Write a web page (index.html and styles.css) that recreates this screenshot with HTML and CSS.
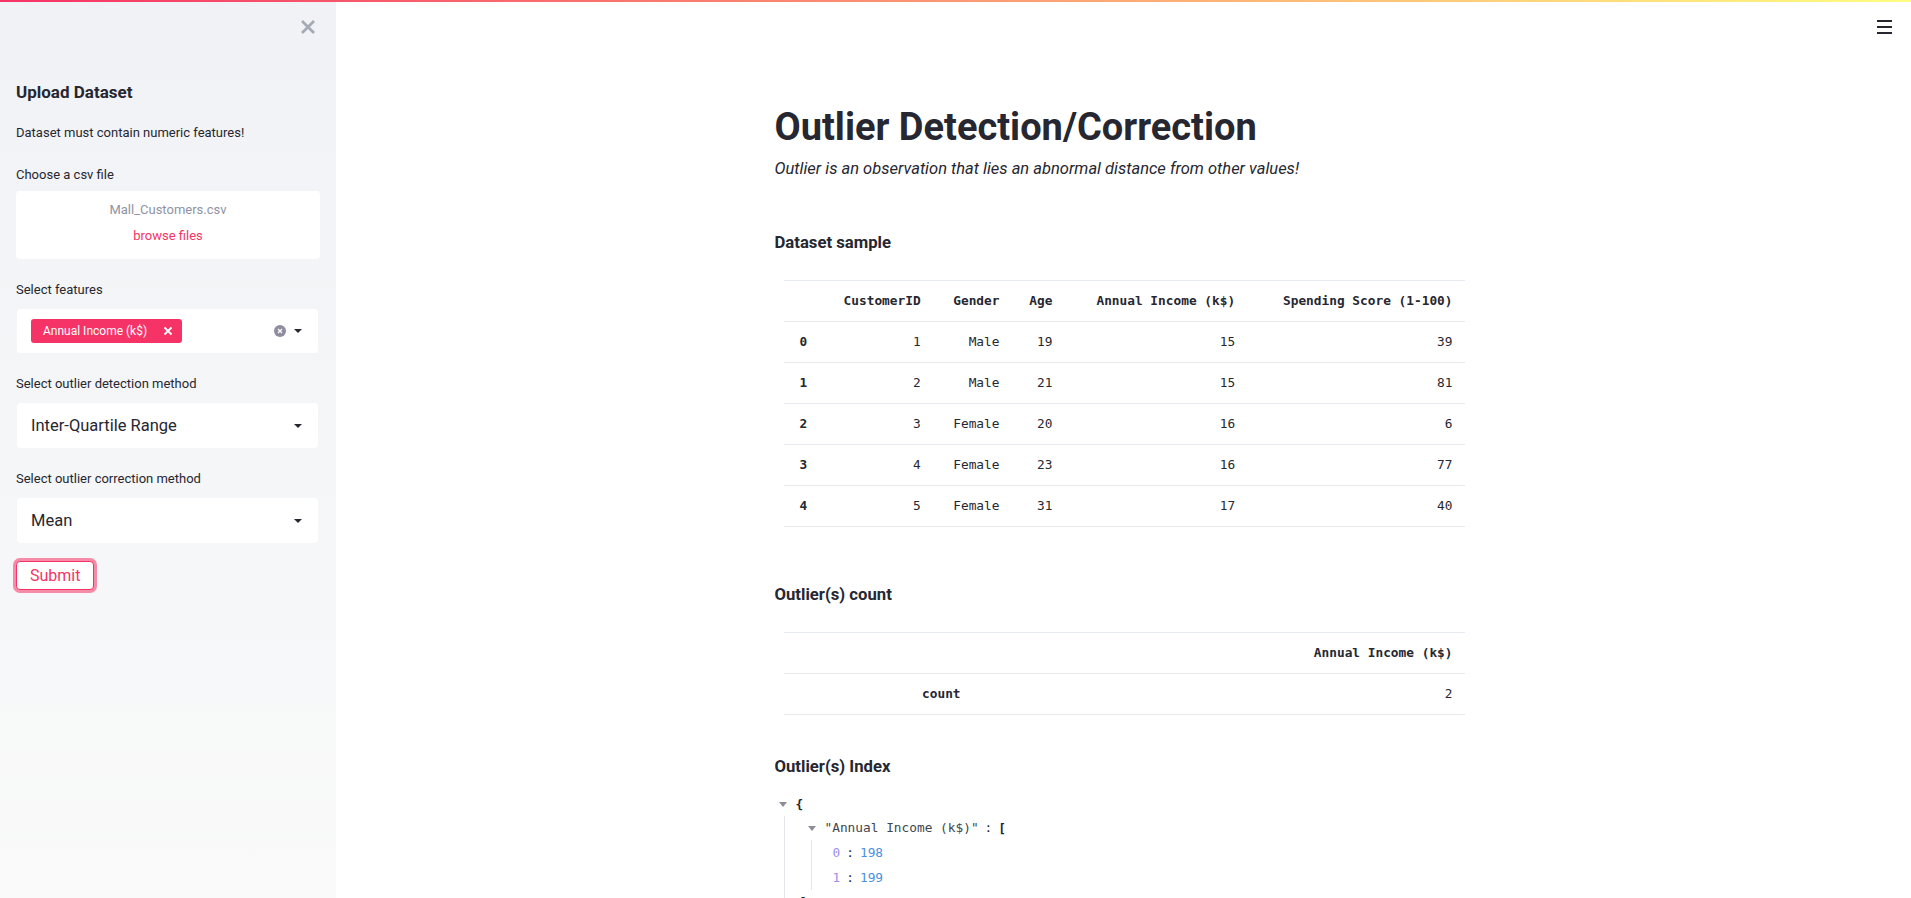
FILE: index.html
```html
<!DOCTYPE html>
<html lang="en">
<head>
<meta charset="utf-8">
<title>Outlier Detection/Correction</title>
<link rel="stylesheet" href="styles.css">
</head>
<body>
<div class="decoration"></div>
<button class="menu" aria-label="Main menu"><span></span><span></span><span></span></button>
<div class="app">
  <aside class="sidebar">
    <div class="sb-top">
      <svg class="sb-close" width="14" height="14" viewBox="0 0 14 14"><path d="M2 2 L12 12 M12 2 L2 12" stroke="#a6a9b6" stroke-width="2.8" stroke-linecap="square"/></svg>
    </div>
    <h3 class="sb-title">Upload Dataset</h3>
    <p class="sb-text">Dataset must contain numeric features!</p>

    <div class="wlabel first">Choose a csv file</div>
    <div class="uploader">
      <div class="file-name">Mall_Customers.csv</div>
      <div class="browse">browse files</div>
    </div>

    <div class="wlabel">Select features</div>
    <div class="select multi">
      <span class="tag">Annual Income (k$)
        <svg class="tag-x" width="10" height="10" viewBox="0 0 10 10"><path d="M1.5 1.5 L8.5 8.5 M8.5 1.5 L1.5 8.5" stroke="#fff" stroke-width="1.8"/></svg>
      </span>
      <span class="controls">
        <svg class="clear" width="12" height="12" viewBox="0 0 12 12"><circle cx="6" cy="6" r="6" fill="#8e8c9e"/><path d="M4 4 L8 8 M8 4 L4 8" stroke="#fff" stroke-width="1.3"/></svg>
        <span class="caret"></span>
      </span>
    </div>

    <div class="wlabel">Select outlier detection method</div>
    <div class="select">
      <span class="value">Inter-Quartile Range</span>
      <span class="caret"></span>
    </div>

    <div class="wlabel">Select outlier correction method</div>
    <div class="select">
      <span class="value">Mean</span>
      <span class="caret"></span>
    </div>

    <button class="submit">Submit</button>
  </aside>

  <main class="main">
    <div class="block">
      <h1 class="title">Outlier Detection/Correction</h1>
      <p class="subtitle">Outlier is an observation that lies an abnormal distance from other values!</p>

      <h3 class="section first-section">Dataset sample</h3>
      <table class="df">
        <thead>
          <tr><th class="idx"></th><th>CustomerID</th><th>Gender</th><th>Age</th><th>Annual Income (k$)</th><th>Spending Score (1-100)</th></tr>
        </thead>
        <tbody>
          <tr><th class="idx">0</th><td>1</td><td>Male</td><td>19</td><td>15</td><td>39</td></tr>
          <tr><th class="idx">1</th><td>2</td><td>Male</td><td>21</td><td>15</td><td>81</td></tr>
          <tr><th class="idx">2</th><td>3</td><td>Female</td><td>20</td><td>16</td><td>6</td></tr>
          <tr><th class="idx">3</th><td>4</td><td>Female</td><td>23</td><td>16</td><td>77</td></tr>
          <tr><th class="idx">4</th><td>5</td><td>Female</td><td>31</td><td>17</td><td>40</td></tr>
        </tbody>
      </table>

      <h3 class="section count-section">Outlier(s) count</h3>
      <table class="df">
        <thead>
          <tr><th class="idx"></th><th>Annual Income (k$)</th></tr>
        </thead>
        <tbody>
          <tr><th class="idx">count</th><td>2</td></tr>
        </tbody>
      </table>

      <h3 class="section index-section">Outlier(s) Index</h3>
      <div class="json">
        <div class="jline"><span class="jcaret"></span><span class="brace">{</span></div>
        <div class="jchildren">
          <div class="jline"><span class="jcaret"></span><span class="jkey">"Annual Income (k$)"</span><span class="jcolon">:</span><span class="brace">[</span></div>
          <div class="jchildren inner">
            <div class="jline item"><span class="jidx">0</span><span class="jcolon">:</span><span class="jnum">198</span></div>
            <div class="jline item"><span class="jidx">1</span><span class="jcolon">:</span><span class="jnum">199</span></div>
          </div>
          <div class="jline close-line"><span class="brace">]</span></div>
        </div>
        <div class="jline"><span class="brace">}</span></div>
      </div>
    </div>
  </main>
</div>
</body>
</html>
```

FILE: styles.css
```css
* { box-sizing: border-box; }

html, body {
  margin: 0;
  padding: 0;
}

body {
  font-family: Roboto, "Liberation Sans", sans-serif;
  color: #262730;
  background: #ffffff;
}

.decoration {
  position: fixed;
  top: 0;
  left: 0;
  right: 0;
  height: 2px;
  background: linear-gradient(90deg, #f63366, #fffd80);
  z-index: 10;
}

.menu {
  position: absolute;
  top: 20px;
  right: 19px;
  width: 15px;
  height: 14px;
  padding: 0;
  border: none;
  background: transparent;
  display: flex;
  flex-direction: column;
  justify-content: space-between;
}
.menu span {
  display: block;
  height: 2px;
  width: 15px;
  background: #262730;
}

.app {
  display: flex;
  align-items: flex-start;
}

/* ---------- Sidebar ---------- */
.sidebar {
  flex: 0 0 336px;
  width: 336px;
  height: 100vh;
  position: sticky;
  top: 0;
  background: linear-gradient(180deg, #f0f2f6 0%, #fafafa 100%);
  padding: 20px 16px 0 16px;
  display: flex;
  flex-direction: column;
  align-items: stretch;
}

.sb-top {
  display: flex;
  justify-content: flex-end;
  padding-right: 5px;
  height: 14px;
}
.sb-close { display: block; }

.sb-title {
  margin: 46px 0 0 0;
  font-size: 17px;
  line-height: 24px;
  font-weight: 700;
}

.sb-text {
  margin: 19px 0 0 0;
  font-size: 13px;
  line-height: 20px;
}

.wlabel {
  margin-top: 21px;
  font-size: 13px;
  line-height: 20px;
}
.wlabel.first { margin-top: 22px; }

.uploader {
  margin-top: 6px;
  height: 68px;
  background: #ffffff;
  border-radius: 4px;
  display: flex;
  flex-direction: column;
  align-items: center;
  padding-top: 9px;
  font-size: 13px;
  line-height: 20px;
}
.file-name { color: #8f93a3; }
.browse { color: #f63366; margin-top: 6px; }

.select {
  margin: 9px 2px 0 1px;
  height: 45px;
  background: #ffffff;
  border-radius: 4px;
  display: flex;
  align-items: center;
  justify-content: space-between;
  padding: 0 16px 0 14px;
}
.select.multi { height: 44px; padding-left: 14px; }

.value {
  font-size: 16.5px;
  color: #262730;
}

.caret {
  width: 0;
  height: 0;
  border-left: 4px solid transparent;
  border-right: 4px solid transparent;
  border-top: 4px solid #262730;
}

.tag {
  display: inline-flex;
  align-items: center;
  height: 24px;
  background: #f63366;
  color: #ffffff;
  border-radius: 3px;
  font-size: 12px;
  padding: 0 9px 0 12px;
  gap: 16px;
}
.tag-x { display: block; }

.controls {
  display: flex;
  align-items: center;
  gap: 8px;
}
.clear { display: block; }

.submit {
  align-self: flex-start;
  margin-top: 18px;
  height: 29px;
  padding: 0 13px;
  background: #ffffff;
  color: #f63366;
  border: 1px solid #f63366;
  border-radius: 4px;
  box-shadow: 0 0 0 3px rgba(246, 51, 102, 0.55);
  font-family: Roboto, "Liberation Sans", sans-serif;
  font-size: 16px;
  line-height: 27px;
}

/* ---------- Main ---------- */
.main {
  flex: 1 1 auto;
  min-width: 0;
}

.block {
  max-width: 736px;
  margin: 0 auto;
  padding: 103px 13px 40px 19px;
}

.title {
  margin: 0;
  font-size: 38px;
  line-height: 48px;
  font-weight: 700;
}

.subtitle {
  margin: 6px 0 0 0;
  font-size: 16.5px;
  line-height: 24px;
  font-style: italic;
}

.section {
  margin: 0;
  font-size: 16.7px;
  line-height: 26px;
  font-weight: 700;
}
.first-section { margin-top: 49px; }
.count-section { margin-top: 55px; }
.index-section { margin-top: 39px; }

.df {
  margin: 24px 0 0 9px;
  width: 681px;
  border-collapse: collapse;
  border-top: 1px solid #e6e9ef;
  font-family: "DejaVu Sans Mono", "Liberation Mono", monospace;
  font-size: 12.8px;
  color: #262730;
}
.df th, .df td {
  padding: 10px 12px;
  line-height: 20px;
  border-bottom: 1px solid #e6e9ef;
  text-align: right;
  white-space: nowrap;
}
.df th { font-weight: 700; }
.df td { font-weight: 400; }

/* ---------- JSON ---------- */
.json {
  margin: 12px 0 0 4px;
  font-family: "DejaVu Sans Mono", "Liberation Mono", monospace;
  font-size: 12.8px;
  line-height: 24px;
  color: #262730;
}
.jline {
  display: flex;
  align-items: center;
  height: 24px;
  white-space: pre;
}
.jline.item { height: 25px; }
.jcaret {
  width: 0;
  height: 0;
  border-left: 4px solid transparent;
  border-right: 4px solid transparent;
  border-top: 5px solid #8d8d95;
  margin-right: 9px;
}
.brace { font-weight: 700; }
.jchildren {
  margin-left: 5px;
  padding-left: 23px;
  border-left: 1px solid #e6e6ea;
}
.jchildren.inner {
  margin-left: 3px;
  padding-left: 21px;
}
.jkey { color: #41464f; }
.jcolon { margin: 0 6px; }
.jidx { color: #9c8ef0; }
.jnum { color: #4a90e2; }
.close-line { margin-left: -8px; }
```
